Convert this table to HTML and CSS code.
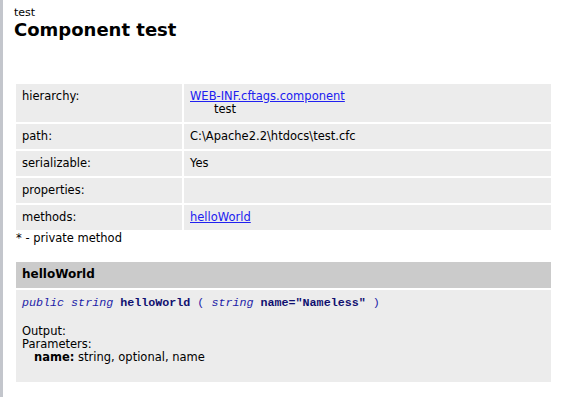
FILE: index.html
```html
<!DOCTYPE html>
<html lang="en">
<head>
    <meta charset="UTF-8">
    <title>Component test</title>
    <link rel="stylesheet" href="styles.css">
</head>
<body>
    <div class="page">
        <div class="pkg">test</div>
        <h1 class="title">Component test</h1>

        <table class="info">
            <tr>
                <td class="label">hierarchy:</td>
                <td class="value">
                    <a href="#">WEB-INF.cftags.component</a>
                    <div class="child">test</div>
                </td>
            </tr>
            <tr>
                <td class="label">path:</td>
                <td class="value">C:\Apache2.2\htdocs\test.cfc</td>
            </tr>
            <tr>
                <td class="label">serializable:</td>
                <td class="value">Yes</td>
            </tr>
            <tr>
                <td class="label">properties:</td>
                <td class="value"></td>
            </tr>
            <tr>
                <td class="label">methods:</td>
                <td class="value"><a href="#helloWorld">helloWorld</a></td>
            </tr>
        </table>
        <div class="note">* - private method</div>

        <div class="method" id="helloWorld">
            <h3 class="method-name">helloWorld</h3>
            <div class="method-body">
                <code class="sig"><i>public</i> <i>string</i> <b>helloWorld</b> ( <i>string</i> <b>name="Nameless"</b> )</code>
                <div class="out">Output:</div>
                <div>Parameters:</div>
                <div class="param"><b>name:</b> string, optional, name</div>
            </div>
        </div>
    </div>
</body>
</html>
```

FILE: styles.css
```css
body {
    margin: 0;
    border-left: 3px solid #c3c6cc;
    min-height: 397px;
    box-sizing: border-box;
    font-family: 'DejaVu Sans', Verdana, sans-serif;
    font-size: 11.5px;
    line-height: 13px;
    color: #000;
    background: #fff;
}

.page {
    padding: 6px 12px 0 11px;
}

.pkg {
    font-size: 11px;
}

.title {
    margin: 0 0 42px 0;
    font-size: 18px;
    line-height: 21px;
    font-weight: bold;
}

a {
    color: #2020f0;
}

/* component info table */
.info {
    width: 539px;
    border-spacing: 2px;
}

.info td {
    background-color: #ececec;
    padding: 6px;
    vertical-align: top;
}

.info .label {
    width: 154px;
}

.child {
    padding-left: 24px;
}

.note {
    padding-left: 2px;
}

/* method block */
.method {
    margin: 17px 0 0 2px;
    width: 535px;
}

.method-name {
    margin: 0 0 2px 0;
    background-color: #cbcbcb;
    padding: 6px 6px 7px;
    font-size: 12px;
    line-height: 13px;
}

.method-body {
    background-color: #ececec;
    padding: 7px 6px 18px;
}

.sig {
    display: block;
    font-family: 'Liberation Mono', 'Courier New', monospace;
    font-size: 11.7px;
    color: #1c1ca8;
}

.sig b {
    color: #101070;
}

.out {
    margin-top: 15px;
}

.param {
    padding-left: 12px;
}
```
